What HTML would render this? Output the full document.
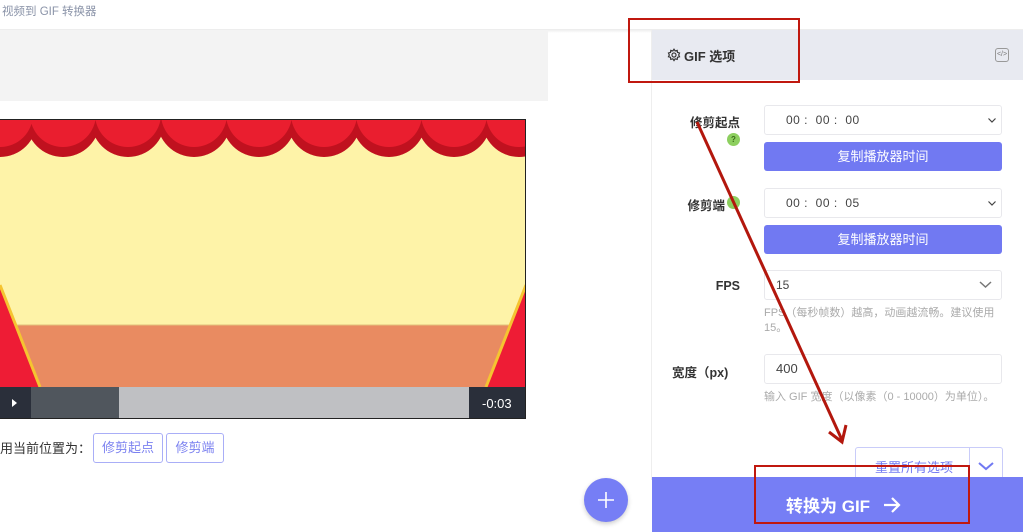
<!DOCTYPE html>
<html><head><meta charset="utf-8"><style>
*{margin:0;padding:0;box-sizing:border-box}
body{width:1023px;height:532px;overflow:hidden;background:#fff;font-family:"Liberation Sans","Noto Sans CJK SC",sans-serif;position:relative}
.a{position:absolute}
.lbl{position:absolute;font-size:12.5px;font-weight:bold;color:#333;text-align:right}
.sel{position:absolute;left:764px;width:238px;height:30px;border:1px solid #e8e8ec;border-radius:3px;background:#fff;font-size:12px;color:#444}
.btn{position:absolute;left:764px;width:238px;height:29px;background:#7179f2;border-radius:3px;color:#fff;font-size:13px;text-align:center;line-height:29px}
.help{position:absolute;left:764px;font-size:11px;color:#aaa;line-height:15px}
.ob{position:absolute;top:433px;height:30px;border:1px solid #a9aef7;border-radius:3px;color:#7c82f0;font-size:13px;line-height:28px;text-align:center}
</style></head><body>
<div class="a" style="left:2px;top:3px;font-size:11.5px;color:#8a93a8">视频到 GIF 转换器</div>
<div class="a" style="left:0;top:29px;width:1023px;height:4px;background:linear-gradient(#eaeaea,#fff)"></div>
<div class="a" style="left:0;top:30px;width:548px;height:71px;background:#f3f3f3"></div>
<!-- video -->
<div class="a" style="left:0;top:119px;width:526px;height:300px;overflow:hidden;border:1px solid #222;border-left:none;background:#fef3a8">
<svg width="526" height="300" style="position:absolute;left:0;top:0">
<rect x="0" y="205" width="526" height="62" fill="#e98b61"/>
<line x1="0" y1="205" x2="526" y2="205" stroke="#e2c27a" stroke-width="1"/>
<polygon points="0,165 40,267 0,267" fill="#ee1c35"/>
<line x1="0" y1="165" x2="40" y2="267" stroke="#f5c431" stroke-width="3"/>
<polygon points="526,165 486,267 526,267" fill="#ee1c35"/>
<line x1="526" y1="165" x2="486" y2="267" stroke="#f5c431" stroke-width="3"/>
<rect x="0" y="0" width="526" height="8" fill="#e81f30"/>
<g fill="#c0111f">
<circle cx="0" cy="0" r="37"/><circle cx="63" cy="0" r="37"/><circle cx="128" cy="0" r="37"/><circle cx="194" cy="0" r="37"/><circle cx="259" cy="0" r="37"/><circle cx="324" cy="0" r="37"/><circle cx="389" cy="0" r="37"/><circle cx="454" cy="0" r="37"/><circle cx="519" cy="0" r="37"/></g>
<g fill="#ea1e2f">
<circle cx="0" cy="-6" r="33"/><circle cx="63" cy="-6" r="33"/><circle cx="128" cy="-6" r="33"/><circle cx="194" cy="-6" r="33"/><circle cx="259" cy="-6" r="33"/><circle cx="324" cy="-6" r="33"/><circle cx="389" cy="-6" r="33"/><circle cx="454" cy="-6" r="33"/><circle cx="519" cy="-6" r="33"/></g>
<rect x="0" y="267" width="31" height="32" fill="#2a2f3a"/>
<polygon points="12,279 17,283 12,287" fill="#fff"/>
<rect x="31" y="267" width="88" height="32" fill="#50565d"/>
<rect x="119" y="267" width="350" height="32" fill="#bfc0c3"/>
<rect x="469" y="267" width="57" height="32" fill="#2a2f3a"/>
<text x="482" y="288" fill="#fff" font-size="13" font-family="Liberation Sans">-0:03</text>
</svg></div>
<div class="a" style="left:0;top:438px;font-size:13px;color:#333">用当前位置为：</div>
<div class="ob" style="left:93px;width:70px">修剪起点</div>
<div class="ob" style="left:166px;width:58px">修剪端</div>
<div class="a" style="left:584px;top:478px;width:44px;height:44px;border-radius:50%;background:#767ef5;box-shadow:0 2px 5px rgba(0,0,0,.2)">
<svg width="44" height="44"><path d="M22 14v16M14 22h16" stroke="#fff" stroke-width="1.6"/></svg></div>
<!-- right panel -->
<div class="a" style="left:651px;top:30px;width:1px;height:450px;background:#eee"></div>
<div class="a" style="left:652px;top:30px;width:371px;height:50px;background:#e8eaf1"></div>
<svg class="a" style="left:667px;top:48px" width="14" height="14" viewBox="0 0 24 24" fill="none" stroke="#333" stroke-width="2"><circle cx="12" cy="12" r="3.5"/><path d="M12 2l2 3 3.5-1 .5 3.5 3.5 1-1.5 3.5 1.5 3-3.5 1-.5 3.5-3.5-1-2 3-2-3-3.5 1-.5-3.5-3.5-1 1.5-3-1.5-3.5 3.5-1 .5-3.5 3.5 1z"/></svg>
<div class="a" style="left:684px;top:46px;font-size:13px;font-weight:bold;color:#333">GIF 选项</div>
<div class="a" style="left:995px;top:48px;width:14px;height:14px;border:1px solid #999;border-radius:3px;font-size:7px;color:#777;text-align:center;line-height:12px">&lt;/&gt;</div>
<div class="lbl" style="left:680px;top:112px;width:60px">修剪起点</div>
<div class="a" style="left:727px;top:133px;width:13px;height:13px;border-radius:50%;background:#8dcf5f;color:#3b6b1b;font-size:8px;font-weight:bold;text-align:center;line-height:13px">?</div>
<div class="sel" style="top:105px"><span class="a" style="left:21px;top:7px;letter-spacing:.5px">00 :&nbsp; 00 :&nbsp; 00</span>
<svg class="a" style="right:5px;top:12px" width="8" height="5"><polyline points="0.5,0.5 4,4 7.5,0.5" fill="none" stroke="#444" stroke-width="1.2"/></svg></div>
<div class="btn" style="top:142px">复制播放器时间</div>
<div class="lbl" style="left:670px;top:195px;width:55px">修剪端</div>
<div class="a" style="left:727px;top:196px;width:13px;height:13px;border-radius:50%;background:#8dcf5f"></div>
<div class="sel" style="top:188px"><span class="a" style="left:21px;top:7px;letter-spacing:.5px">00 :&nbsp; 00 :&nbsp; 05</span>
<svg class="a" style="right:5px;top:12px" width="8" height="5"><polyline points="0.5,0.5 4,4 7.5,0.5" fill="none" stroke="#444" stroke-width="1.2"/></svg></div>
<div class="btn" style="top:225px">复制播放器时间</div>
<div class="lbl" style="left:690px;top:279px;width:50px">FPS</div>
<div class="sel" style="top:270px"><span class="a" style="left:11px;top:7px">15</span>
<svg class="a" style="right:9px;top:10px" width="13" height="8"><polyline points="1,1 6.5,6 12,1" fill="none" stroke="#777" stroke-width="1.5"/></svg></div>
<div class="help" style="top:306px;width:240px">FPS（每秒帧数）越高，动画越流畅。建议使用15。</div>
<div class="lbl" style="left:672px;top:362px;width:70px;text-align:left">宽度（px)</div>
<div class="sel" style="top:354px"><span class="a" style="left:11px;top:6px;font-size:13px">400</span></div>
<div class="help" style="top:390px;width:250px">输入 GIF 宽度（以像素（0 - 10000）为单位）。</div>
<div class="a" style="left:855px;top:447px;width:148px;height:34px;border:1px solid #c9ccf9;border-radius:3px;background:#fff"></div>
<div class="a" style="left:969px;top:447px;width:1px;height:32px;background:#c9ccf9"></div>
<div class="a" style="left:875px;top:457px;font-size:13px;color:#7179f2">重置所有选项</div>
<svg class="a" style="left:978px;top:462px" width="16" height="9"><polyline points="1,1 8,7 15,1" fill="none" stroke="#7179f2" stroke-width="2"/></svg>
<div class="a" style="left:652px;top:477px;width:371px;height:55px;background:#767ef5"></div>
<div class="a" style="left:786px;top:492px;font-size:17px;font-weight:bold;color:#fff">转换为 GIF</div>
<svg class="a" style="left:882px;top:496px" width="20" height="18"><path d="M2 9h15M10 2l7 7-7 7" fill="none" stroke="#fff" stroke-width="2.2"/></svg>
<!-- annotations -->
<div class="a" style="left:628px;top:18px;width:172px;height:65px;border:2px solid #c0180f"></div>
<div class="a" style="left:754px;top:465px;width:216px;height:59px;border:2px solid #c0180f"></div>
<svg class="a" style="left:0;top:0" width="1023" height="532"><line x1="697" y1="122" x2="842" y2="440" stroke="#b3170d" stroke-width="3"/><polyline points="829,432 842,442 846,425" fill="none" stroke="#b3170d" stroke-width="3"/></svg>
</body></html>
